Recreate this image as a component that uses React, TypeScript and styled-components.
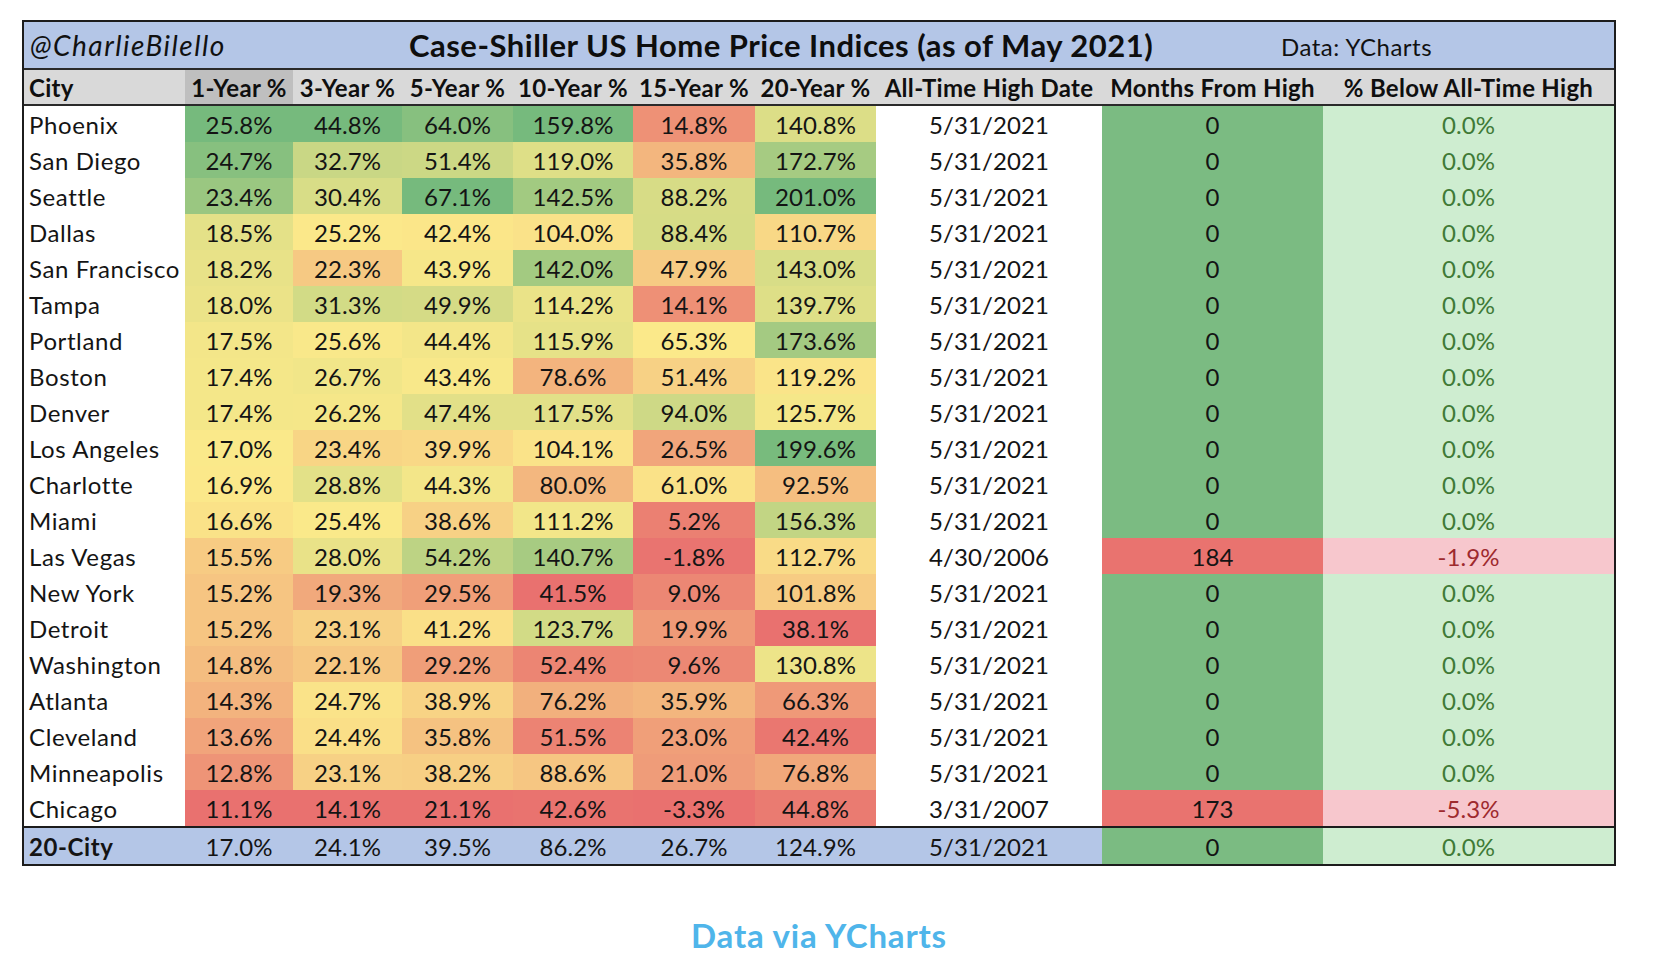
import React from "react";
import styled, { createGlobalStyle } from "styled-components";

const GlobalStyle = createGlobalStyle`
  html, body { margin: 0; padding: 0; background: #ffffff; }
  body { font-family: Lato, "Open Sans", "Liberation Sans", sans-serif; color: #141414; }
`;

const COLS = "161px 108px 109px 111px 120px 122px 121px 226px 221px 291px";

const Page = styled.div`
  padding: 20px 0 0 22px;
  width: 1594px;
`;

const Sheet = styled.div`
  width: 1590px;
  border: 2px solid #1c1c1c;
  display: flex;
  flex-direction: column;
`;

const TitleRow = styled.div`
  display: grid;
  grid-template-columns: 385px 742px 1fr;
  align-items: center;
  height: 46px;
  background: #b4c6e7;
  border-bottom: 2px solid #2a2a2a;
`;

const Handle = styled.div`
  font-style: italic;
  font-size: 28px;
  padding-left: 6px;
  color: #111;
  letter-spacing: 1.5px;
`;

const Title = styled.div`
  font-weight: 700;
  font-size: 31px;
  letter-spacing: 0.5px;
  text-align: center;
  white-space: nowrap;
  color: #0e0e0e;
`;

const Source = styled.div`
  font-size: 24px;
  letter-spacing: 0.5px;
  padding-left: 130px;
  padding-top: 3px;
  white-space: nowrap;
  color: #111;
`;

const HeaderRow = styled.div`
  display: grid;
  grid-template-columns: ${COLS};
  height: 34px;
  background: #d9d9d9;
  border-bottom: 2px solid #2a2a2a;
`;

const HeaderCell = styled.div<{ $shade?: boolean; $left?: boolean }>`
  display: flex;
  align-items: center;
  justify-content: ${(p) => (p.$left ? "flex-start" : "center")};
  padding-left: ${(p) => (p.$left ? "5px" : "0")};
  background: ${(p) => (p.$shade ? "#bfbfbf" : "transparent")};
  font-weight: 700;
  font-size: 24px;
  letter-spacing: 0.3px;
  white-space: nowrap;
  color: #0f0f0f;
`;

const DataRow = styled.div<{ $total?: boolean }>`
  display: grid;
  grid-template-columns: ${COLS};
  height: 36px;
  background: ${(p) => (p.$total ? "#b4c6e7" : "#ffffff")};
  border-top: ${(p) => (p.$total ? "2px solid #1c1c1c" : "none")};
`;

const Cell = styled.div<{ $bg?: string; $left?: boolean; $color?: string; $bold?: boolean }>`
  display: flex;
  align-items: center;
  justify-content: ${(p) => (p.$left ? "flex-start" : "center")};
  padding-left: ${(p) => (p.$left ? "5px" : "0")};
  background: ${(p) => p.$bg || "transparent"};
  color: ${(p) => p.$color || "#141414"};
  font-weight: ${(p) => (p.$bold ? 700 : 400)};
  font-size: 24px;
  letter-spacing: ${(p) => (p.$left ? "0.6px" : "0.1px")};
  white-space: nowrap;
`;

const Footer = styled.div`
  width: 1594px;
  text-align: center;
  margin-top: 49px;
  font-weight: 700;
  font-size: 33px;
  letter-spacing: 0.8px;
  color: #4fb5ea;
`;

type Row = [string, number, number, number, number, number, number, string, number, number];

const ROWS: Row[] = [
  ["Phoenix", 25.8, 44.8, 64.0, 159.8, 14.8, 140.8, "5/31/2021", 0, 0.0],
  ["San Diego", 24.7, 32.7, 51.4, 119.0, 35.8, 172.7, "5/31/2021", 0, 0.0],
  ["Seattle", 23.4, 30.4, 67.1, 142.5, 88.2, 201.0, "5/31/2021", 0, 0.0],
  ["Dallas", 18.5, 25.2, 42.4, 104.0, 88.4, 110.7, "5/31/2021", 0, 0.0],
  ["San Francisco", 18.2, 22.3, 43.9, 142.0, 47.9, 143.0, "5/31/2021", 0, 0.0],
  ["Tampa", 18.0, 31.3, 49.9, 114.2, 14.1, 139.7, "5/31/2021", 0, 0.0],
  ["Portland", 17.5, 25.6, 44.4, 115.9, 65.3, 173.6, "5/31/2021", 0, 0.0],
  ["Boston", 17.4, 26.7, 43.4, 78.6, 51.4, 119.2, "5/31/2021", 0, 0.0],
  ["Denver", 17.4, 26.2, 47.4, 117.5, 94.0, 125.7, "5/31/2021", 0, 0.0],
  ["Los Angeles", 17.0, 23.4, 39.9, 104.1, 26.5, 199.6, "5/31/2021", 0, 0.0],
  ["Charlotte", 16.9, 28.8, 44.3, 80.0, 61.0, 92.5, "5/31/2021", 0, 0.0],
  ["Miami", 16.6, 25.4, 38.6, 111.2, 5.2, 156.3, "5/31/2021", 0, 0.0],
  ["Las Vegas", 15.5, 28.0, 54.2, 140.7, -1.8, 112.7, "4/30/2006", 184, -1.9],
  ["New York", 15.2, 19.3, 29.5, 41.5, 9.0, 101.8, "5/31/2021", 0, 0.0],
  ["Detroit", 15.2, 23.1, 41.2, 123.7, 19.9, 38.1, "5/31/2021", 0, 0.0],
  ["Washington", 14.8, 22.1, 29.2, 52.4, 9.6, 130.8, "5/31/2021", 0, 0.0],
  ["Atlanta", 14.3, 24.7, 38.9, 76.2, 35.9, 66.3, "5/31/2021", 0, 0.0],
  ["Cleveland", 13.6, 24.4, 35.8, 51.5, 23.0, 42.4, "5/31/2021", 0, 0.0],
  ["Minneapolis", 12.8, 23.1, 38.2, 88.6, 21.0, 76.8, "5/31/2021", 0, 0.0],
  ["Chicago", 11.1, 14.1, 21.1, 42.6, -3.3, 44.8, "3/31/2007", 173, -5.3],
];

const TOTAL: Row = ["20-City", 17.0, 24.1, 39.5, 86.2, 26.7, 124.9, "5/31/2021", 0, 0.0];

const RED: [number, number, number] = [233, 113, 111];
const YELLOW: [number, number, number] = [251, 233, 138];
const GREEN: [number, number, number] = [118, 186, 125];

const mix = (a: number[], b: number[], t: number) => {
  const c = a.map((v, i) => Math.round(v + (b[i] - v) * Math.max(0, Math.min(1, t))));
  return `rgb(${c[0]}, ${c[1]}, ${c[2]})`;
};

const median = (vals: number[]) => {
  const s = [...vals].sort((x, y) => x - y);
  const n = s.length;
  return n % 2 ? s[(n - 1) / 2] : (s[n / 2 - 1] + s[n / 2]) / 2;
};

type Scale = { min: number; mid: number; max: number };

const scales: Scale[] = [1, 2, 3, 4, 5, 6].map((ci) => {
  const vals = ROWS.map((r) => r[ci] as number);
  return { min: Math.min(...vals), mid: median(vals), max: Math.max(...vals) };
});
// the 15-year column uses a wider scale in the source sheet
scales[4] = { min: -3.3, mid: 65, max: 150 };

const scaleColor = (v: number, s: Scale) =>
  v <= s.mid ? mix(RED, YELLOW, (v - s.min) / (s.mid - s.min)) : mix(YELLOW, GREEN, (v - s.mid) / (s.max - s.mid));

const pct = (v: number) => `${v.toFixed(1)}%`;

const HEADERS = [
  "City",
  "1-Year %",
  "3-Year %",
  "5-Year %",
  "10-Year %",
  "15-Year %",
  "20-Year %",
  "All-Time High Date",
  "Months From High",
  "% Below All-Time High",
];

const MonthsCell = ({ v }: { v: number }) => <Cell $bg={v > 0 ? "#e9736f" : "#7bbb82"}>{v}</Cell>;

const BelowCell = ({ v }: { v: number }) => (
  <Cell $bg={v < 0 ? "#f7c7cd" : "#ceedd0"} $color={v < 0 ? "#9e2a2e" : "#3f7a36"}>
    {pct(v)}
  </Cell>
);

export default function App() {
  return (
    <>
      <GlobalStyle />
      <Page>
        <Sheet>
          <TitleRow>
            <Handle>@CharlieBilello</Handle>
            <Title>Case-Shiller US Home Price Indices (as of May 2021)</Title>
            <Source>Data: YCharts</Source>
          </TitleRow>
          <HeaderRow>
            {HEADERS.map((h, i) => (
              <HeaderCell key={h} $left={i === 0} $shade={i === 1}>
                {h}
              </HeaderCell>
            ))}
          </HeaderRow>
          {ROWS.map((r) => (
            <DataRow key={r[0]}>
              <Cell $left>{r[0]}</Cell>
              {[1, 2, 3, 4, 5, 6].map((ci) => (
                <Cell key={ci} $bg={scaleColor(r[ci] as number, scales[ci - 1])}>
                  {pct(r[ci] as number)}
                </Cell>
              ))}
              <Cell>{r[7]}</Cell>
              <MonthsCell v={r[8]} />
              <BelowCell v={r[9]} />
            </DataRow>
          ))}
          <DataRow $total>
            <Cell $left $bold>
              {TOTAL[0]}
            </Cell>
            {[1, 2, 3, 4, 5, 6].map((ci) => (
              <Cell key={ci}>{pct(TOTAL[ci] as number)}</Cell>
            ))}
            <Cell>{TOTAL[7]}</Cell>
            <MonthsCell v={TOTAL[8]} />
            <BelowCell v={TOTAL[9]} />
          </DataRow>
        </Sheet>
        <Footer>Data via YCharts</Footer>
      </Page>
    </>
  );
}
